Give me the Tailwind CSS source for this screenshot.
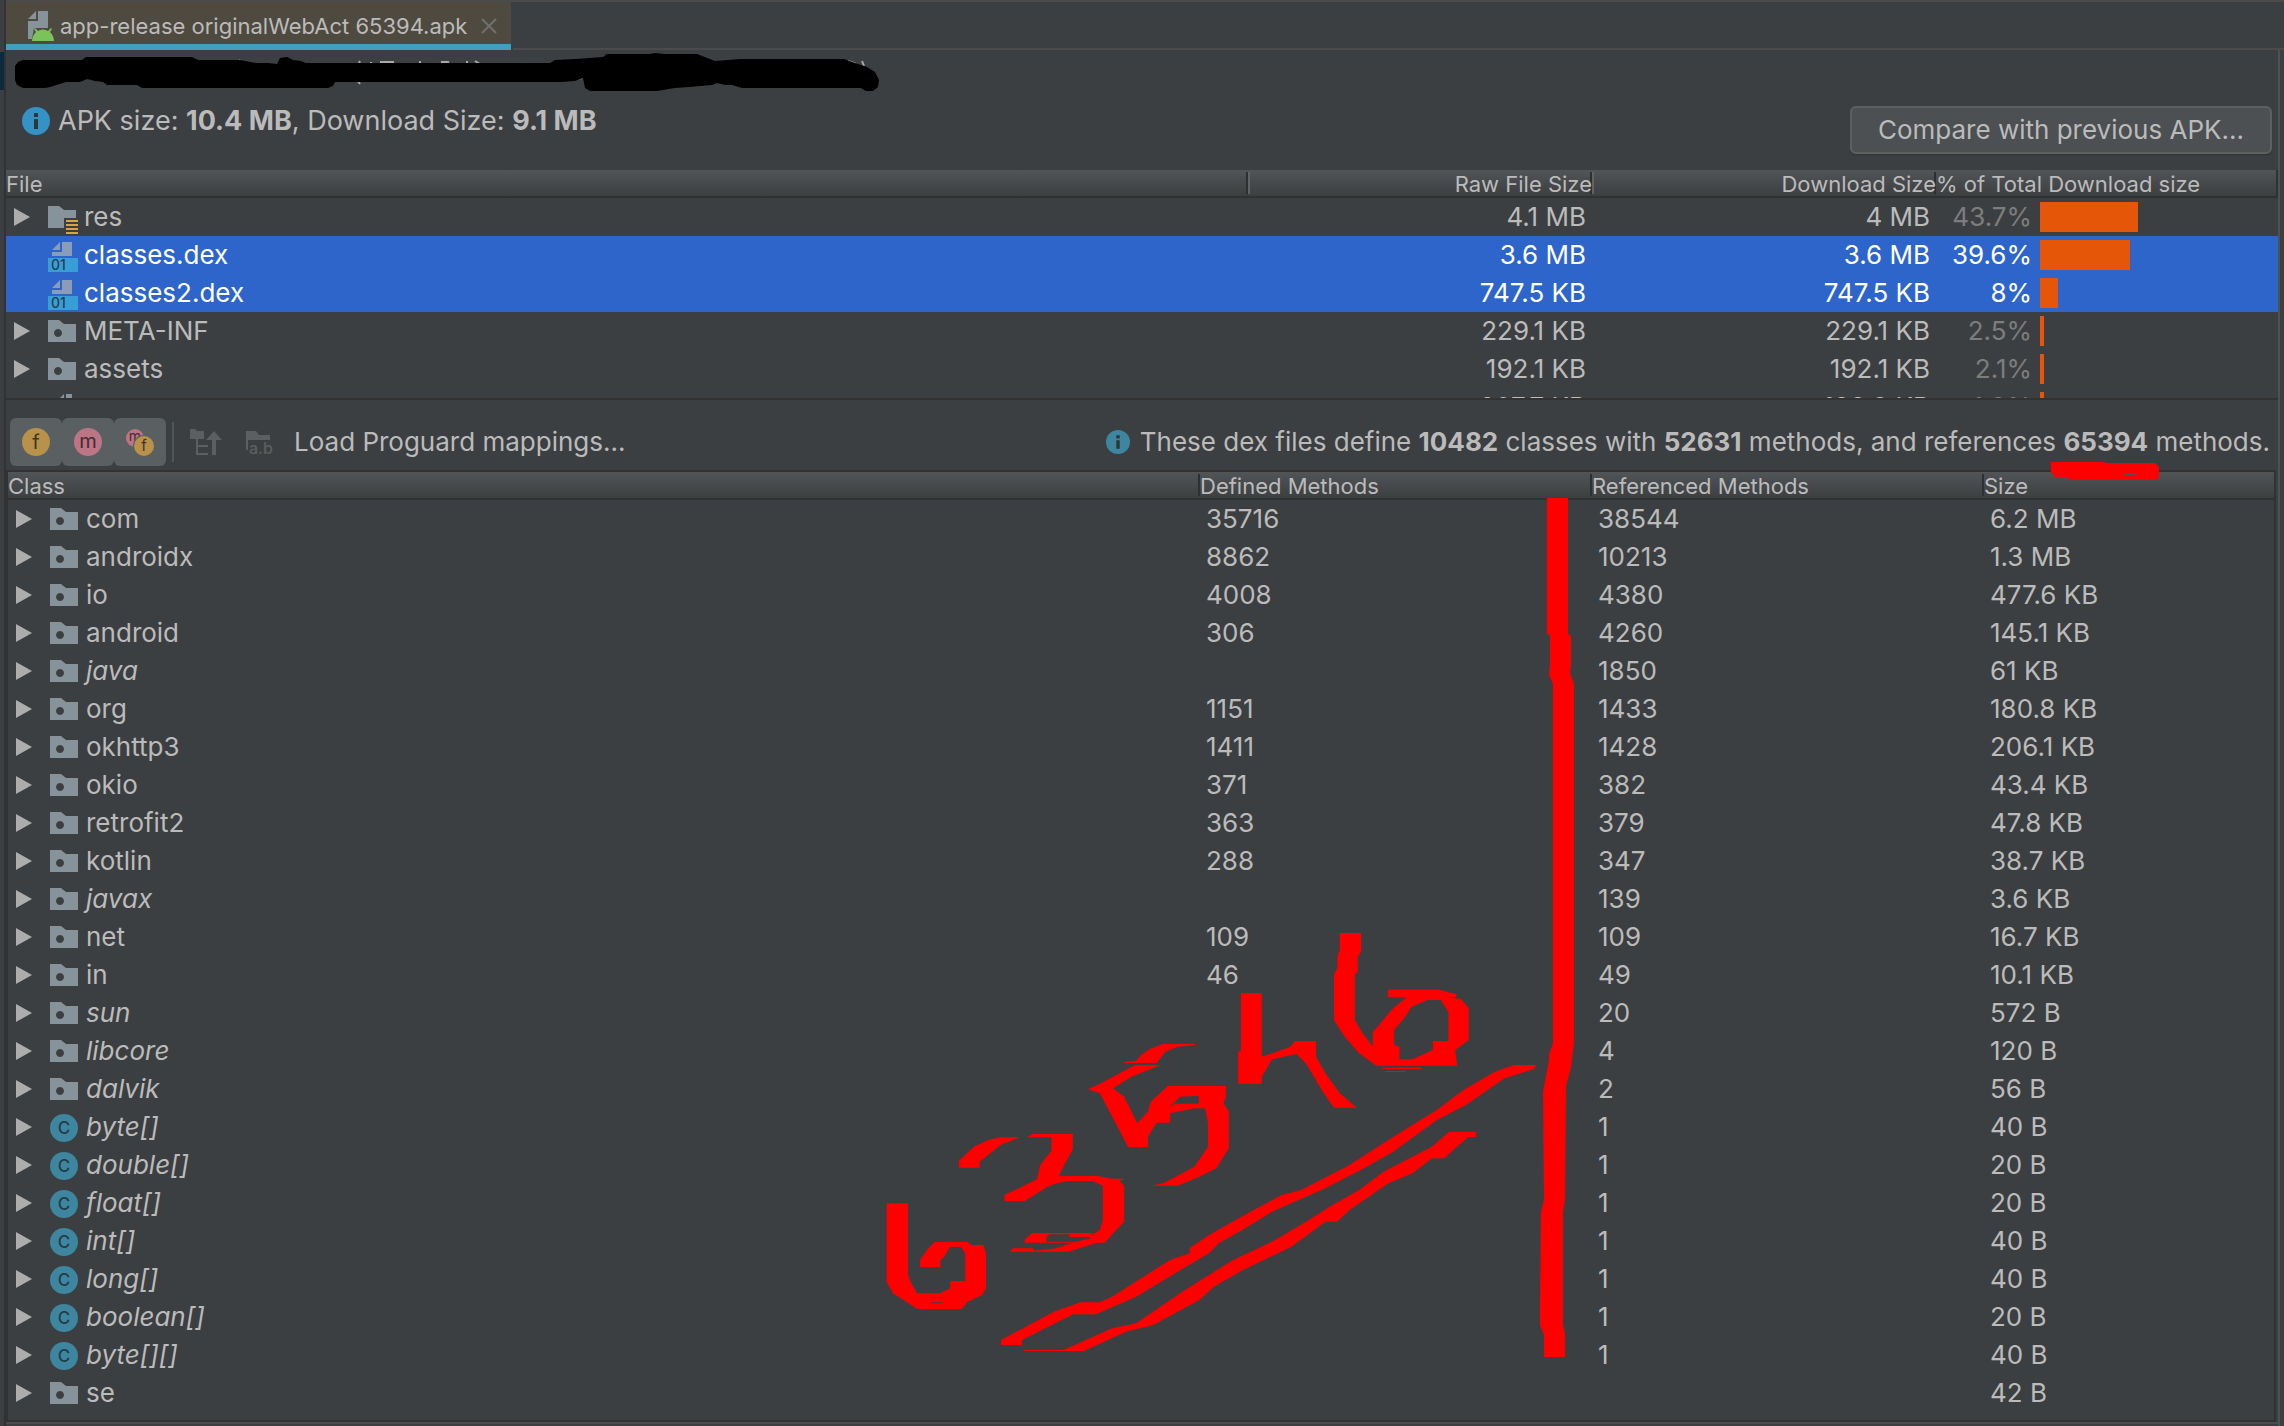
<!doctype html>
<html lang="en">

<head>
  <meta charset="utf-8">
  <title>app-release originalWebAct 65394.apk</title>
  <meta name="viewport" content="width=device-width, initial-scale=1">
  <script src="https://cdn.jsdelivr.net/npm/@tailwindcss/browser@4"></script>
</head>

<body class="relative flex min-h-screen overflow-x-hidden bg-[#3c3f41] font-['Inter','Liberation_Sans',sans-serif] text-[26px] leading-[30px] text-[#bbbbbb]">
  <!-- icon sprites -->
  <svg class="hidden">
    <symbol id="package" viewBox="0 0 28 22">
      <path fill="#87939a" fill-rule="evenodd" d="M0 0h11l5 4h12v18H0zM10 9a4 4 0 1 0 .01 0z" />
    </symbol>
    <symbol id="res" viewBox="0 0 30 28">
      <path fill="#87939a" d="M0 0h11l5 4h12v8H16v10H0z" />
      <path fill="#d9a343" d="M18 14h12v2H18zM18 18h12v2H18zM18 22h12v2H18zM18 26h12v2H18z" />
    </symbol>
    <symbol id="dex" viewBox="0 0 30 30">
      <path fill="#8a9cb8" d="M12 0v8H4zM14 0h10v14H4v-4h10z" />
      <path fill="#389fd6" d="M0 16h30v14H0z" />
      <text x="3" y="28" font-size="14" font-weight="500" fill="#223e55">01</text>
    </symbol>
    <symbol id="file" viewBox="0 0 30 30">
      <path fill="#87939a" d="M16 0v8H8zM18 0h6v28H8V10h10z" />
    </symbol>
    <symbol id="class" viewBox="0 0 28 28">
      <circle cx="14" cy="14" r="14" fill="#3e86a0" />
      <text x="14" y="20" font-size="17" font-weight="500" text-anchor="middle" fill="#243c47">C</text>
    </symbol>
    <symbol id="info" viewBox="0 0 28 28">
      <circle cx="14" cy="14" r="14" fill="currentColor" />
      <path fill="#2f3437" d="M12 6h4v4h-4zM12 12h4v10h-4z" />
    </symbol>
  </svg>

  <div class="w-1 shrink-0">
    <div class="mt-[52px] h-[38px] bg-[#0d293e]"></div>
  </div>

  <main class="flex min-w-0 flex-1 flex-col border-l-2 border-[#323232]">
    <!-- editor tabs -->
    <div class="flex h-[50px] border-t-2 border-[#4b4b4b]">
      <div class="flex items-center border-b-6 border-[#3f9fbd] bg-[#4e4a3f] pt-1.5 pr-3.5 pl-[22px] text-[22px]">
        <svg class="mr-1.5 h-[30px] w-[26px]" viewBox="0 0 26 30">
          <path fill="#87939a" d="M8 0v8H0zM10 0h10v17H6l-2 11H0V10h10z" />
          <path fill="#7ac35a" d="M4 30c0-4 2-7 4-9l-2-3 1-1 3 3c4-2 7-2 10 0l3-3 1 1-2 3c2 2 4 5 4 9z" />
        </svg>
        <span class="whitespace-nowrap">app-release originalWebAct 65394.apk</span>
        <button class="ml-3.5" aria-label="Close tab">
          <svg class="size-4" viewBox="0 0 16 16" stroke="#6f7171" stroke-width="2"><path d="M1 1l14 14M15 1L1 15" /></svg>
        </button>
      </div>
      <div class="ml-0.5 flex-1 border-b-2 border-[#4b4b4b]"></div>
    </div>

    <div class="mr-1 flex min-h-0 flex-1 flex-col border-r-2 border-[#4f5052]">
      <section class="flex h-[120px] items-start justify-between pt-14 pr-1.5 pl-4">
        <p class="flex items-center gap-2 text-[27px] whitespace-nowrap">
          <svg class="size-7 text-[#3592c4]"><use href="#info" /></svg>
          <span>APK size: <b class="font-bold">10.4 MB</b>, Download Size: <b class="font-bold">9.1 MB</b></span>
        </p>
        <button class="h-12 rounded-md border-2 border-[#5e6060] bg-[#4c5052] px-[26px] leading-[44px] shadow-[0_2px_0_#35383a]">Compare with previous APK...</button>
      </section>

      <!-- archive contents -->
      <section class="h-[230px] overflow-hidden border-b-2 border-[#323232]">
        <table class="w-full table-fixed border-separate border-spacing-0">
          <colgroup>
            <col>
            <col class="w-[344px]">
            <col class="w-[344px]">
            <col class="w-[342px]">
          </colgroup>
          <thead>
            <tr class="h-7 bg-linear-to-b from-[#515558] to-[#3b3d3e] text-[22px] leading-[24px] whitespace-nowrap">
              <th class="relative border-b-2 border-[#2f3132] p-0 pt-0.5 text-left font-normal">File<i class="absolute top-0.5 right-0 h-[22px] w-0.5 bg-[#2d2f30]"></i></th>
              <th class="relative border-b-2 border-[#2f3132] p-0 pt-0.5 text-right font-normal"><i class="absolute top-0.5 right-0 h-[22px] w-0.5 bg-[#2d2f30]"></i><i class="absolute top-0.5 left-0 h-[22px] w-0.5 bg-[#5f6366]"></i><span class="relative">Raw File Size</span></th>
              <th class="relative border-b-2 border-[#2f3132] p-0 pt-0.5 text-right font-normal"><i class="absolute top-0.5 right-0 h-[22px] w-0.5 bg-[#2d2f30]"></i><i class="absolute top-0.5 left-0 h-[22px] w-0.5 bg-[#5f6366]"></i><span class="relative">Download Size</span></th>
              <th class="relative border-r-2 border-b-2 border-[#2f3132] p-0 pt-0.5 text-left font-normal">% of Total Download size</th>
            </tr>
          </thead>
          <tbody id="files"></tbody>
        </table>
      </section>

      <!-- dex toolbar -->
      <section class="flex h-[70px] items-center justify-between pt-[18px] pr-2 pb-1 pl-1 whitespace-nowrap">
        <div class="flex items-center">
          <button class="flex h-12 w-[52px] items-center justify-center rounded-md bg-[#5a5f61]" aria-label="Show fields">
            <svg class="size-7" viewBox="0 0 28 28"><circle cx="14" cy="14" r="14" fill="#b8914a" /><text x="14" y="21" font-size="20" text-anchor="middle" fill="#3f3524">f</text></svg>
          </button>
          <button class="flex h-12 w-[52px] items-center justify-center rounded-md bg-[#5a5f61]" aria-label="Show methods">
            <svg class="size-7" viewBox="0 0 28 28"><circle cx="14" cy="14" r="14" fill="#bb7585" /><text x="14" y="20" font-size="20" text-anchor="middle" fill="#442c32">m</text></svg>
          </button>
          <button class="flex h-12 w-[52px] items-center justify-center rounded-md bg-[#5a5f61]" aria-label="Show all referenced methods or fields">
            <svg class="size-7" viewBox="0 0 28 28"><circle cx="9" cy="10" r="9" fill="#bb7585" /><text x="9" y="13" font-size="14" text-anchor="middle" fill="#442c32">m</text><circle cx="18" cy="18" r="11" fill="#5a5f61" /><circle cx="18" cy="18" r="10" fill="#b8914a" /><text x="18" y="23" font-size="15" text-anchor="middle" fill="#3f3524">f</text></svg>
          </button>
          <div class="ml-1.5 h-10 w-0.5 bg-[#525556]"></div>
          <button class="ml-4" aria-label="Show full tree" disabled>
            <svg class="h-[26px] w-8" viewBox="0 0 32 26" fill="#5c5e5f"><path d="M0 0h5l2 2h7v8H0zM6 10h2v6h10v2H8v6h10v2H6zM24 2l8 9h-6v15h-4V11h-6z" /></svg>
          </button>
          <button class="ml-6" aria-label="Deobfuscate names" disabled>
            <svg class="h-[26px] w-7" viewBox="0 0 28 26" fill="#5c5e5f"><path d="M0 2h10l3 4h11v5H2v10H0z" /><text x="3" y="25" font-size="16" font-weight="500">a.b</text></svg>
          </button>
          <button class="ml-5">Load Proguard mappings...</button>
        </div>
        <p class="flex items-center gap-2.5">
          <svg class="size-6 text-[#3e86a0]"><use href="#info" /></svg>
          <span>These dex files define <b class="font-bold">10482</b> classes with <b class="font-bold">52631</b> methods, and references <b class="font-bold">65394</b> methods.</span>
        </p>
      </section>

      <!-- class tree -->
      <section class="mr-0.5 flex-1 border-2 border-[#323232]">
        <table class="w-full table-fixed border-separate border-spacing-0">
          <colgroup>
            <col>
            <col class="w-[392px]">
            <col class="w-[392px]">
            <col class="w-[290px]">
          </colgroup>
          <thead>
            <tr class="h-7 bg-linear-to-b from-[#515558] to-[#3b3d3e] text-left text-[22px] leading-[24px] whitespace-nowrap">
              <th class="relative border-b-2 border-[#2f3132] p-0 pt-0.5 font-normal">Class<i class="absolute top-0.5 right-0 h-[22px] w-0.5 bg-[#2d2f30]"></i></th>
              <th class="relative border-b-2 border-[#2f3132] p-0 pt-0.5 font-normal">Defined Methods<i class="absolute top-0.5 right-0 h-[22px] w-0.5 bg-[#2d2f30]"></i></th>
              <th class="relative border-b-2 border-[#2f3132] p-0 pt-0.5 font-normal">Referenced Methods<i class="absolute top-0.5 right-0 h-[22px] w-0.5 bg-[#2d2f30]"></i></th>
              <th class="border-b-2 border-[#2f3132] p-0 pt-0.5 font-normal">Size</th>
            </tr>
          </thead>
          <tbody id="classes"></tbody>
        </table>
      </section>
      <div class="h-1 border-t-2 border-[#4b4b4b]"></div>
    </div>
  </main>

  <!-- marker annotations drawn over the window -->
  <svg class="pointer-events-none absolute top-0 left-0 h-[1426px] w-[2284px]" viewBox="0 0 2284 1426" aria-hidden="true">
    <path fill="none" stroke="#a8a8a8" stroke-width="2" d="M239 60l3 3M268 65h8M360 61l-3 7M357 80l3 4M371 62v3M380 62h14M420 61v3M441 62h8M467 61v3M475 61l5 3M568 80l14-2M848 61l8 3M862 61l2 5" />
    <path d="M15 66L18 62 23 60H82L86 57H192L198 60H240L256 63H268L277 64 280 58 287 57 293 60 301 61 306 63H550L555 60 575 59 603 57 607 54H650L655 53 665 54H697L715 61 740 59H844L855 63 867 67 875 72 879 80 878 87 873 91H866L861 88H742L732 85H725L717 83 712 85 689 87 675 88 657 91H590L585 88 583 78 575 81 562 82H335L333 86 328 88H142L137 85H107L103 82 95 81 87 79 80 82H66L50 87 45 88H23L17 85 15 80Z" />
    <g fill="#ff0000">
      <path fill-rule="evenodd" d="M2051 462H2105V463H2155L2159 467V477L2156 480H2069V477H2054V474H2051ZM2124 474H2135V475H2124Z" />
      <path d="M1547 498H1568V634L1571 636V664L1570 673 1574 684V1043L1571 1067 1566 1086 1565 1200 1563 1212V1325L1565 1333V1357H1544V1335L1540 1325V1307L1541 1212 1544 1200 1543 1092 1549 1060V1055L1553 1043V684L1549 675 1550 664V635L1547 634Z" />
      <g fill-rule="evenodd" transform="translate(860 900) scale(.4847 .3333)">
        <path d="M55 910H99V1125L106 1150 118 1180H165L186 1165V1143H217V1060L208 1040H186L174 1070 166 1080V1101H124V1080L138 1050 154 1026H222L230 1035H254L260 1060V1165L252 1185 222 1205 210 1227H118L90 1200 68 1180 55 1145ZM145 1191H172V1194H145ZM148 1207H170V1210H148Z" />
        <path d="M204 803V783L235 740 265 720 290 712H345L356 702H439V748L425 785 410 828H490L520 836H545V838L535 842 545 857V965L525 995 505 1028H490L480 1032 430 1055H309L315 1045H356L360 1052 400 1046 440 1028H340V1018L356 999H478V1005L495 990 501 960V857L480 843H430L405 850 385 862 340 903H298V885L330 863 365 838 372 795 395 752V712H330L290 735 247 785V803ZM392 1003H432V1011H478L470 1018 440 1026H385V1010Z" />
        <path d="M545 489V486L569 483 580 465 598 447 625 432H691V435L655 440 630 455 612 489Z" />
        <path d="M568 495H620L560 530 522 565 545 590 572 670 594 635 600 605 635 558H755V590L750 610 761 635V745L735 805 700 830 655 857H602L628 848 690 800 718 740V670L712 625H690L640 640V668H612L594 710V741H553L535 690 495 580 470 568 490 555ZM638 622L650 611H699V588H688L660 590Z" />
        <path d="M786 279H829V470L860 455 888 440 898 423H941V470L960 520 990 580 1025 623H978L955 575 920 490 900 462 850 478 829 530V551H780V457L786 450Z" />
        <path d="M990 99H1034V155L1027 170V215L1021 225V360L1035 395 1058 440V395L1068 380 1085 350 1100 325 1128 292H1089V269H1195L1230 283V291H1205L1240 297 1256 325V420L1228 450 1232 497H1065L1030 460 1000 410 978 360V222L985 205V170L990 150ZM1138 320L1172 299 1198 300 1214 335V423H1182V450L1140 478H1113V440L1102 435V390L1125 350ZM1078 503H1158V507H1078ZM1083 513H1125V516H1083Z" />
        <path d="M1396 495H1350L1310 515 1245 570 1190 630 1090 720 1010 795 910 870 870 885 800 940 720 1005 680 1045V1060L640 1080 520 1190 495 1207H455L400 1235 291 1320V1335H334V1320L440 1243H487L515 1225 570 1190 690 1085 720 1060 740 1030 800 980 850 935 960 865 1040 805 1100 755 1190 660 1250 615 1330 535 1390 507Z" />
        <path d="M1271 696H1215L1180 740 1080 815 1030 870 975 915 920 965 850 1025 770 1080 665 1175 570 1270 520 1285 420 1350H340V1353H462L550 1295 605 1275 700 1200 730 1160 790 1110 890 1040 960 965H984L1010 930 1090 850 1140 820 1180 775H1205L1255 711H1271Z" />
      </g>
    </g>
  </svg>

  <script>
    (function () {
      const icons = {
        package: '<svg class="h-[22px] w-7"><use href="#package" /></svg>',
        res: '<svg class="mt-1.5 h-7 w-[30px]"><use href="#res" /></svg>',
        dex: '<svg class="mt-1 size-[30px]"><use href="#dex" /></svg>',
        file: '<svg class="mt-1 size-[30px]"><use href="#file" /></svg>',
        class: '<svg class="mt-0.5 size-7"><use href="#class" /></svg>'
      };
      const arrow = '<svg class="h-[18px] w-4" viewBox="0 0 16 18"><path fill="#adadad" d="M0 0l16 9-16 9z" /></svg>';

      // name, icon, raw size, download size, percent, bar width
      const files = [
        ['res', 'res', '4.1 MB', '4 MB', '43.7%', 98],
        ['classes.dex', 'dex', '3.6 MB', '3.6 MB', '39.6%', 90],
        ['classes2.dex', 'dex', '747.5 KB', '747.5 KB', '8%', 18],
        ['META-INF', 'package', '229.1 KB', '229.1 KB', '2.5%', 4],
        ['assets', 'package', '192.1 KB', '192.1 KB', '2.1%', 4],
        ['resources.arsc', 'file', '207.7 KB', '188.8 KB', '1.9%', 4]
      ];
      document.querySelector('#files').innerHTML = files.map(function ([name, icon, raw, download, percent, bar]) {
        const selected = icon === 'dex';
        const leaf = selected || icon === 'file';
        return `
          <tr class="h-[38px] whitespace-nowrap ${selected ? 'bg-[#2d65ca] text-white' : ''}">
            <td class="p-0">
              <div class="flex h-[38px] items-center pl-2">
                <span class="w-[34px]">${leaf ? '' : arrow}</span>
                <span class="flex w-[36px] items-center">${icons[icon]}</span>
                <span>${name}</span>
              </div>
            </td>
            <td class="p-0 pr-1.5 text-right">${raw}</td>
            <td class="p-0 pr-1.5 text-right">${download}</td>
            <td class="p-0">
              <div class="flex items-center gap-2">
                <span class="w-24 text-right ${selected ? '' : 'text-[#7d7d7d]'}">${percent}</span>
                <span class="h-[30px] bg-[#e65609]" style="width: ${bar}px"></span>
              </div>
            </td>
          </tr>`;
      }).join('');

      // name, defined, referenced, size, only referenced (italic)
      const classes = [
        ['com', '35716', '38544', '6.2 MB'],
        ['androidx', '8862', '10213', '1.3 MB'],
        ['io', '4008', '4380', '477.6 KB'],
        ['android', '306', '4260', '145.1 KB'],
        ['java', '', '1850', '61 KB', true],
        ['org', '1151', '1433', '180.8 KB'],
        ['okhttp3', '1411', '1428', '206.1 KB'],
        ['okio', '371', '382', '43.4 KB'],
        ['retrofit2', '363', '379', '47.8 KB'],
        ['kotlin', '288', '347', '38.7 KB'],
        ['javax', '', '139', '3.6 KB', true],
        ['net', '109', '109', '16.7 KB'],
        ['in', '46', '49', '10.1 KB'],
        ['sun', '', '20', '572 B', true],
        ['libcore', '', '4', '120 B', true],
        ['dalvik', '', '2', '56 B', true],
        ['byte[]', '', '1', '40 B', true],
        ['double[]', '', '1', '20 B', true],
        ['float[]', '', '1', '20 B', true],
        ['int[]', '', '1', '40 B', true],
        ['long[]', '', '1', '40 B', true],
        ['boolean[]', '', '1', '20 B', true],
        ['byte[][]', '', '1', '40 B', true],
        ['se', '', '', '42 B']
      ];
      document.querySelector('#classes').innerHTML = classes.map(function ([name, defined, referenced, size, italic]) {
        return `
          <tr class="h-[38px] whitespace-nowrap">
            <td class="p-0">
              <div class="flex h-[38px] items-center pl-2">
                <span class="w-[34px]">${arrow}</span>
                <span class="flex w-[36px] items-center">${name.includes('[]') ? icons.class : icons.package}</span>
                <span class="${italic ? 'italic' : ''}">${name}</span>
              </div>
            </td>
            <td class="p-0 pl-1.5">${defined}</td>
            <td class="p-0 pl-1.5">${referenced}</td>
            <td class="p-0 pl-1.5">${size}</td>
          </tr>`;
      }).join('');
    })()
  </script>
</body>

</html>
